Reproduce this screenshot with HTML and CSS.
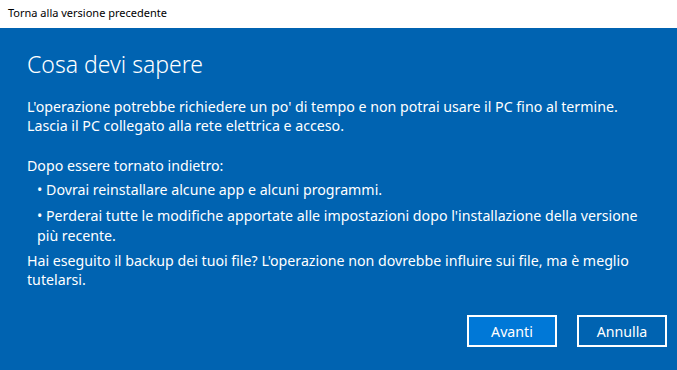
FILE: index.html
```html
<!DOCTYPE html>
<html lang="it">
<head>
<meta charset="utf-8">
<title>Torna alla versione precedente</title>
<link rel="stylesheet" href="styles.css">
</head>
<body>
<div class="window">
  <div class="titlebar">Torna alla versione precedente</div>
  <div class="content">
    <h1 class="heading">Cosa devi sapere</h1>
    <p class="para">L'operazione potrebbe richiedere un po' di tempo e non potrai usare il PC fino al termine.<br>Lascia il PC collegato alla rete elettrica e acceso.</p>
    <p class="para intro">Dopo essere tornato indietro:</p>
    <ul class="list">
      <li class="item">• Dovrai reinstallare alcune app e alcuni programmi.</li>
      <li class="item">• Perderai tutte le modifiche apportate alle impostazioni dopo l'installazione della versione<br>più recente.</li>
    </ul>
    <p class="para last">Hai eseguito il backup dei tuoi file? L'operazione non dovrebbe influire sui file, ma è meglio<br>tutelarsi.</p>
    <div class="actions">
      <button class="btn primary">Avanti</button>
      <button class="btn">Annulla</button>
    </div>
  </div>
</div>
</body>
</html>
```
FILE: styles.css
```css
html, body {
  margin: 0;
  padding: 0;
  width: 677px;
  height: 370px;
  overflow: hidden;
  background: #0063b1;
}
.window {
  display: flex;
  flex-direction: column;
  height: 370px;
  font-family: "Noto Sans", "Open Sans", sans-serif;
}
.titlebar {
  height: 28px;
  background: #ffffff;
  color: #000000;
  font-size: 11px;
  line-height: 26px;
  padding-left: 8px;
  box-sizing: border-box;
}
.content {
  flex: 1;
  background: #0063b1;
  color: #ffffff;
  padding: 0 10px 0 27px;
  display: flex;
  flex-direction: column;
}
.heading {
  margin: 21px 0 0 0;
  font-weight: 300;
  font-size: 23px;
  line-height: 30px;
}
.para {
  margin: 0;
  font-size: 14.2px;
  line-height: 19px;
  white-space: nowrap;
}
.heading + .para {
  margin-top: 18px;
}
.intro {
  margin-top: 21px;
}
.list {
  list-style: none;
  margin: 4.5px 0 0 0;
  padding: 0 0 0 10px;
}
.item {
  font-size: 14.2px;
  line-height: 20px;
  white-space: nowrap;
}
.item + .item {
  margin-top: 6px;
}
.last {
  margin-top: 5.5px;
}
.actions {
  display: flex;
  justify-content: flex-end;
  gap: 20px;
  margin-top: 26px;
}
.btn {
  width: 90px;
  height: 32px;
  box-sizing: border-box;
  border: 2px solid #ffffff;
  background: #0063b1;
  color: #ffffff;
  font-family: inherit;
  font-size: 14.2px;
  padding: 0;
}
.primary {
  background: #0078d7;
}
```
